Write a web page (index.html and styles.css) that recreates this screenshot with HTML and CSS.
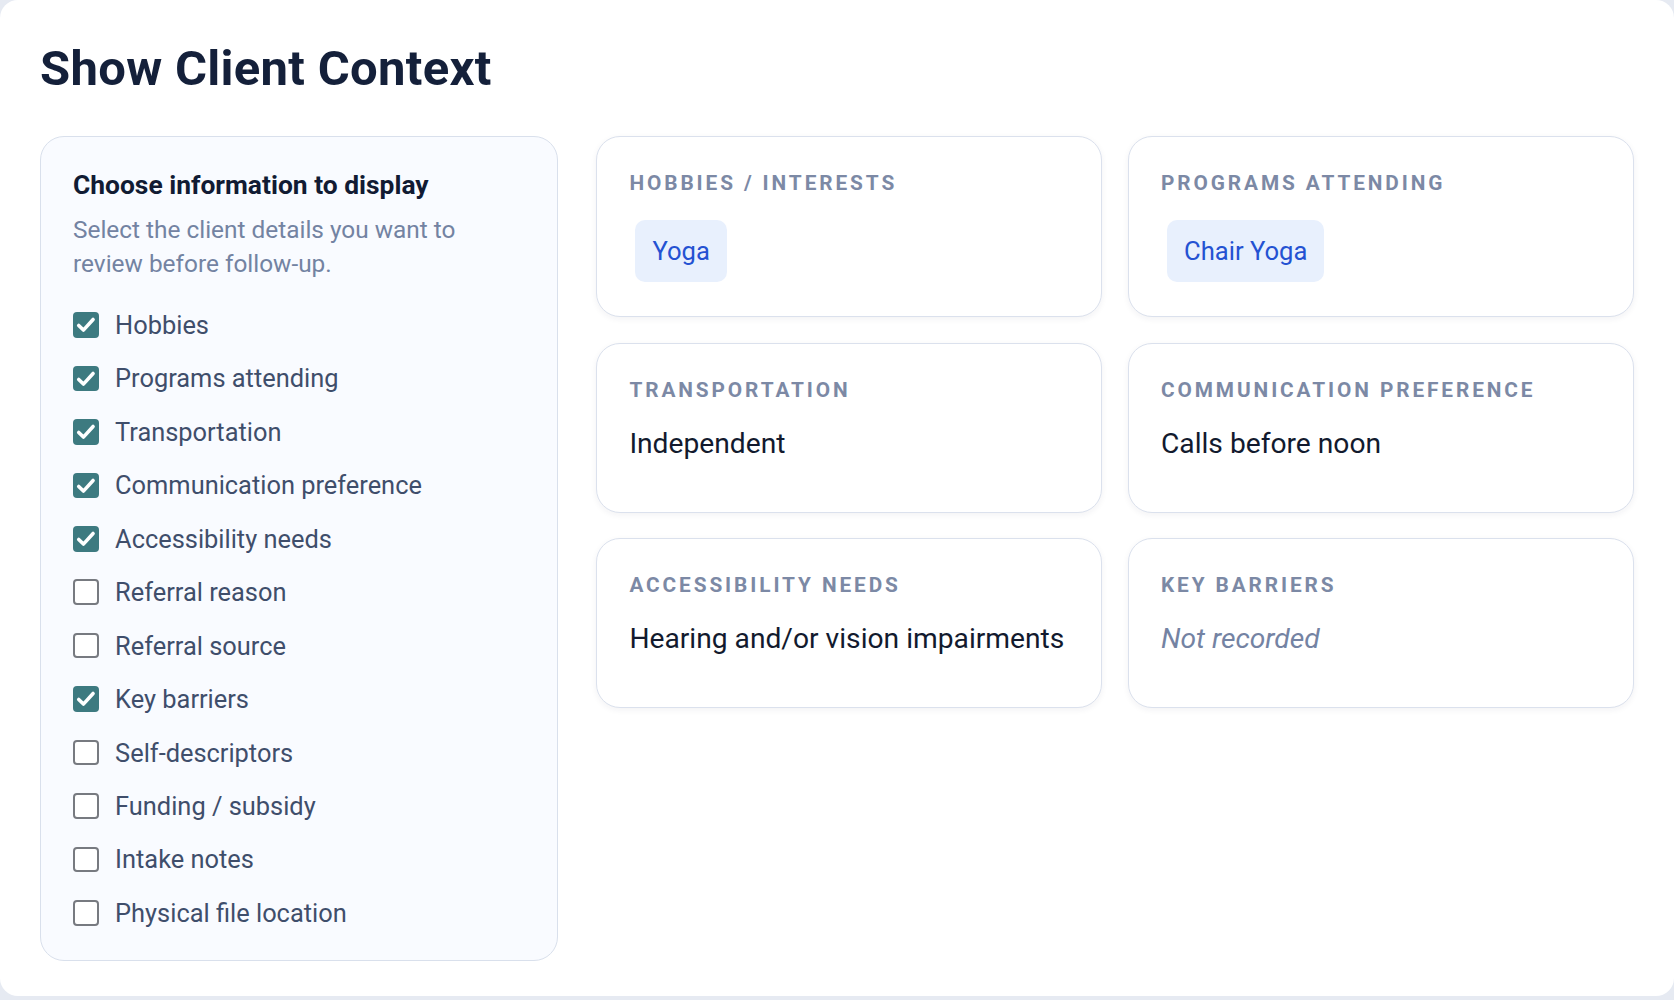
FILE: index.html
```html
<!DOCTYPE html>
<html lang="en">
<head>
<meta charset="utf-8">
<title>Show Client Context</title>
<link rel="stylesheet" href="styles.css">
</head>
<body>
<main class="page">
  <h1 class="title">Show Client Context</h1>
  <div class="layout">
    <section class="panel">
      <h2 class="panel-title">Choose information to display</h2>
      <p class="panel-sub">Select the client details you want to review before follow-up.</p>
      <ul class="checklist">
        <li class="check-row"><span class="box checked"><svg viewBox="0 0 26 26"><path d="M5.8 13.6 L10.6 18.4 L20.4 7.6"/></svg></span><span class="check-label">Hobbies</span></li>
        <li class="check-row"><span class="box checked"><svg viewBox="0 0 26 26"><path d="M5.8 13.6 L10.6 18.4 L20.4 7.6"/></svg></span><span class="check-label">Programs attending</span></li>
        <li class="check-row"><span class="box checked"><svg viewBox="0 0 26 26"><path d="M5.8 13.6 L10.6 18.4 L20.4 7.6"/></svg></span><span class="check-label">Transportation</span></li>
        <li class="check-row"><span class="box checked"><svg viewBox="0 0 26 26"><path d="M5.8 13.6 L10.6 18.4 L20.4 7.6"/></svg></span><span class="check-label">Communication preference</span></li>
        <li class="check-row"><span class="box checked"><svg viewBox="0 0 26 26"><path d="M5.8 13.6 L10.6 18.4 L20.4 7.6"/></svg></span><span class="check-label">Accessibility needs</span></li>
        <li class="check-row"><span class="box"></span><span class="check-label">Referral reason</span></li>
        <li class="check-row"><span class="box"></span><span class="check-label">Referral source</span></li>
        <li class="check-row"><span class="box checked"><svg viewBox="0 0 26 26"><path d="M5.8 13.6 L10.6 18.4 L20.4 7.6"/></svg></span><span class="check-label">Key barriers</span></li>
        <li class="check-row"><span class="box"></span><span class="check-label">Self-descriptors</span></li>
        <li class="check-row"><span class="box"></span><span class="check-label">Funding / subsidy</span></li>
        <li class="check-row"><span class="box"></span><span class="check-label">Intake notes</span></li>
        <li class="check-row"><span class="box"></span><span class="check-label">Physical file location</span></li>
      </ul>
    </section>
    <section class="cards">
      <article class="card">
        <h3 class="card-label">Hobbies / Interests</h3>
        <div class="chips"><span class="chip">Yoga</span></div>
      </article>
      <article class="card">
        <h3 class="card-label">Programs attending</h3>
        <div class="chips"><span class="chip">Chair Yoga</span></div>
      </article>
      <article class="card">
        <h3 class="card-label">Transportation</h3>
        <p class="card-value">Independent</p>
      </article>
      <article class="card">
        <h3 class="card-label">Communication preference</h3>
        <p class="card-value">Calls before noon</p>
      </article>
      <article class="card">
        <h3 class="card-label">Accessibility needs</h3>
        <p class="card-value">Hearing and/or vision impairments</p>
      </article>
      <article class="card">
        <h3 class="card-label">Key barriers</h3>
        <p class="card-value empty">Not recorded</p>
      </article>
    </section>
  </div>
</main>
</body>
</html>
```
FILE: styles.css
```css
* {
  box-sizing: border-box;
}

html, body {
  margin: 0;
  padding: 0;
}

body {
  background: #e6eaf2;
  font-family: Roboto, "Noto Sans", "Liberation Sans", sans-serif;
  color: #14203a;
}

.page {
  height: 996px;
  background: #ffffff;
  border-radius: 18px;
  padding: 40px 40px 0;
}

.title {
  margin: 0 0 38px;
  font-size: 49px;
  line-height: 58px;
  font-weight: 700;
  color: #14203a;
  letter-spacing: 0.3px;
}

.layout {
  display: grid;
  grid-template-columns: 518px 1fr;
  column-gap: 38.4px;
  align-items: start;
}

.panel {
  background: #f9fbff;
  border: 1px solid #d9e0ec;
  border-radius: 24px;
  padding: 32px 32px 29px;
}

.panel-title {
  margin: 0;
  font-size: 26.4px;
  line-height: 33px;
  font-weight: 700;
  color: #111b33;
}

.panel-sub {
  margin: 11px 0 0;
  font-size: 24.4px;
  line-height: 34px;
  color: #7383a2;
  max-width: 400px;
}

.checklist {
  list-style: none;
  margin: 26px 0 0;
  padding: 0;
  display: flex;
  flex-direction: column;
  gap: 17.44px;
}

.check-row {
  display: flex;
  align-items: center;
  gap: 16.5px;
  height: 36px;
}

.box {
  flex: none;
  width: 25.6px;
  height: 25.6px;
  border: 2px solid #777a80;
  border-radius: 4px;
  background: #ffffff;
  display: flex;
  align-items: center;
  justify-content: center;
}

.box.checked {
  border: none;
  background: #3d7a80;
}

.box svg {
  width: 25.6px;
  height: 25.6px;
  display: block;
}

.box svg path {
  fill: none;
  stroke: #ffffff;
  stroke-width: 3.6;
  stroke-linecap: round;
  stroke-linejoin: round;
}

.check-label {
  font-size: 25.4px;
  line-height: 36px;
  color: #3f4e6b;
}

.cards {
  display: grid;
  grid-template-columns: 1fr 1fr;
  gap: 25.6px;
}

.card {
  background: #ffffff;
  border: 1px solid #dbe1ed;
  border-radius: 24px;
  padding: 32px;
  min-height: 170px;
  box-shadow: 0 2px 6px rgba(30, 41, 70, 0.06);
}

.card-label {
  margin: 0;
  font-size: 20.8px;
  line-height: 28px;
  font-weight: 700;
  text-transform: uppercase;
  letter-spacing: 2.9px;
  color: #7c89a5;
}

.chips {
  display: flex;
  flex-wrap: wrap;
  gap: 8px;
  margin: 23px 0 2px 6px;
}

.chip {
  display: inline-block;
  background: #e8f0fd;
  color: #2452d2;
  font-size: 25.6px;
  line-height: 38px;
  padding: 12px 17px;
  border-radius: 10px;
}

.card-value {
  margin: 20px 0 0;
  font-size: 28.2px;
  line-height: 40px;
  color: #121a2e;
}

.card-value.empty {
  font-style: italic;
  color: #7483a3;
}
```
